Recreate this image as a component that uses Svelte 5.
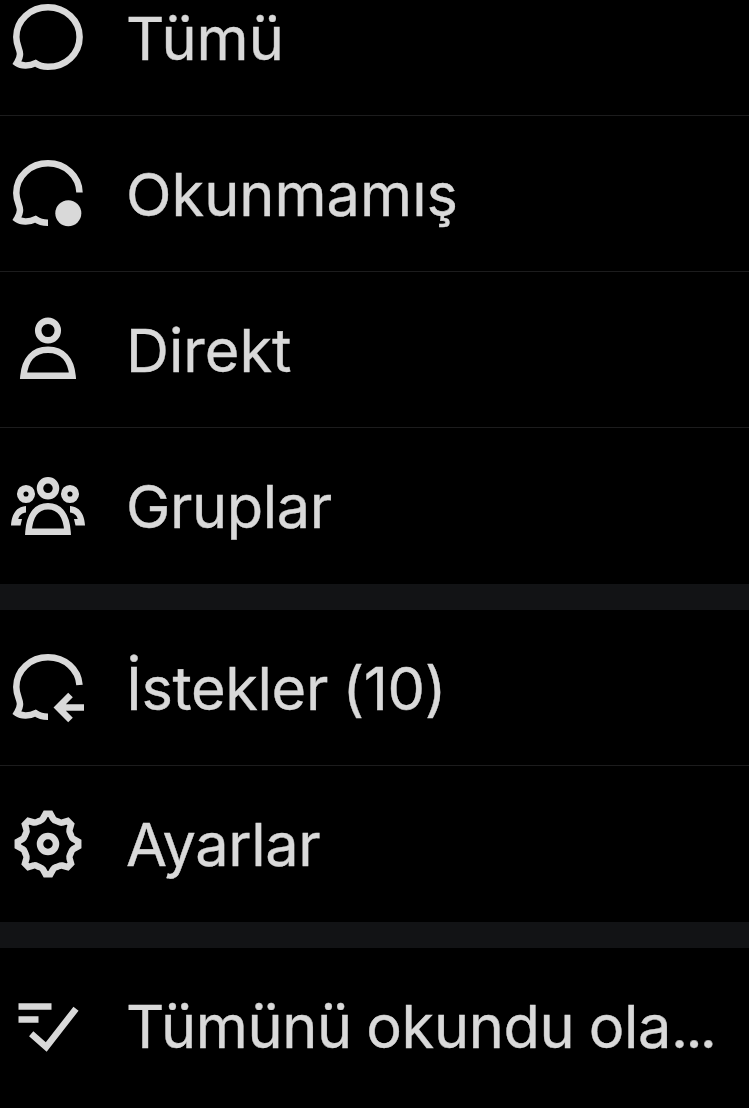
<script>
	const groups = [
		[
			{ id: "all", label: "Tümü" },
			{ id: "unread", label: "Okunmamış" },
			{ id: "direct", label: "Direkt" },
			{ id: "groups", label: "Gruplar", tight: true },
		],
		[
			{ id: "requests", label: "İstekler (10)", tight: true },
			{ id: "settings", label: "Ayarlar", tight: true },
		],
		[{ id: "read", label: "Tümünü okundu ola", cut: true, tight: true }],
	];

	// one eighth of the gear outline, repeated around the centre
	const tooth = [
		[-2.4, -30.2],
		[2.4, -30.2],
		[5.2, -25.2],
		[6, -23.8],
		[7.6, -23.4],
		[9.4, -22.7],
		[11.2, -22],
		[12.2, -20.9],
		[14.1, -21.5],
	];

	function gear() {
		let d = "";

		for (let i = 0; i < 8; i += 1) {
			const a = (i * Math.PI) / 4;
			const p = tooth.map(([x, y]) => {
				const rx = 39 + x * Math.cos(a) - y * Math.sin(a);
				const ry = 39 + x * Math.sin(a) + y * Math.cos(a);
				return `${rx.toFixed(2)} ${ry.toFixed(2)}`;
			});

			d += `${i ? "L" : "M"}${p[0]}L${p[1]}L${p[2]}C${p[3]} ${p[4]} ${p[5]}C${p[6]} ${p[7]} ${p[8]}`;
		}

		return d + "Z";
	}
</script>

<nav class="menu">
	{#each groups as items}
		<div class="group">
			{#each items as item}
				<button class="item">
					<svg class="icon" viewBox="0 0 78 78" aria-hidden="true">
						{#if item.id === "all"}
							<path d="M39 67.8C56.5 67.8 70.6 55 70.6 38C70.6 21.5 56.5 8.3 39 8.3C21.5 8.3 7.3 21 7.3 38C7.3 46 11 50.5 11 55C11 59 9 62 7.8 64C12 67 20 67.5 26.5 64.2C29.5 66.5 34 67.8 39 67.8Z" />
						{:else if item.id === "unread"}
							<path d="M70.5 37.5C70.2 21.2 56.5 8.3 39 8.3C21.5 8.3 7.3 21 7.3 38C7.3 46 11 50.5 11 55C11 59 9 62 7.8 64C12 67 20 67.5 26.5 64.2C29.5 66.5 34 67.8 39 67.8" />
							<circle class="solid" cx="59.3" cy="58.3" r="13" />
						{:else if item.id === "direct"}
							<circle cx="39" cy="19.5" r="9.8" />
							<path d="M14.5 64.75C16 49 24 38.75 39 38.75S62 49 63.5 64.75Z" />
						{:else if item.id === "groups"}
							<circle cx="39" cy="21.3" r="8" />
							<circle cx="17" cy="27" r="5.8" />
							<circle cx="61" cy="27" r="5.8" />
							<path d="M19.5 64.75C20.5 49 27 39.3 39 39.3S57.5 49 58.5 64.75Z" />
							<path class="solid" d="M17 39C7 39.5 2.5 48 2 58.5H11.5L13 52H9.3C10 48.5 13 46 17 45.5Z" />
							<path class="solid" d="M61 39C71 39.5 75.5 48 76 58.5H66.5L65 52H68.7C68 48.5 65 46 61 45.5Z" />
						{:else if item.id === "requests"}
							<path d="M70.5 36C69.4 20.4 56.2 8.3 39 8.3C21.5 8.3 7.3 21 7.3 38C7.3 46 11 50.5 11 55C11 59 9 62 7.8 64C12 67 20 67.5 26.5 64.2C29.5 66.5 34 67.8 39 67.8" />
							<path d="M61.5 46L49.1 58.5L61.5 71M51 58.5H75" />
						{:else if item.id === "settings"}
							<path d={gear()} />
							<circle cx="39" cy="39" r="8" />
						{:else}
							<path d="M9.5 19.6H42.5M9.5 32.5H29.5M22.2 46.8L37.2 60L67 21.7" />
						{/if}
					</svg>
					<span class="label" class:tight={item.tight}>{item.label}{#if item.cut}<span class="dots">...</span>{/if}</span>
				</button>
			{/each}
		</div>
	{/each}
</nav>

<style>
	:global(body) {
		background: #000;
		overflow: hidden;
	}

	/* scrolled slightly, so the first row is cut by the top edge */
	.menu {
		display: flex;
		flex-direction: column;
		min-height: 1148px;
		margin-top: -40px;
		background: #000;
	}

	.group + .group {
		border-top: 26px solid #121315;
	}

	.item {
		display: flex;
		align-items: center;
		gap: 39px;
		box-sizing: border-box;
		width: 100%;
		height: 156px;
		padding: 0 9px;
		border: 0;
		background: none;
		color: #d9d9d9;
		font: 400 59.5px/78px Inter, "Liberation Sans", sans-serif;
		text-align: left;
	}

	.item:not(:last-child) {
		box-shadow: inset 0 -1px #1c1c1d;
	}

	.icon {
		flex: none;
		width: 78px;
		height: 78px;
		fill: none;
		stroke: currentColor;
		stroke-width: 6.5;
	}

	.solid {
		fill: currentColor;
		stroke: none;
	}

	.label {
		white-space: nowrap;
		-webkit-text-stroke: 0.4px currentColor;
	}

	.tight {
		letter-spacing: -0.4px;
		word-spacing: -1.8px;
	}

	.dots {
		letter-spacing: -2.8px;
	}
</style>
